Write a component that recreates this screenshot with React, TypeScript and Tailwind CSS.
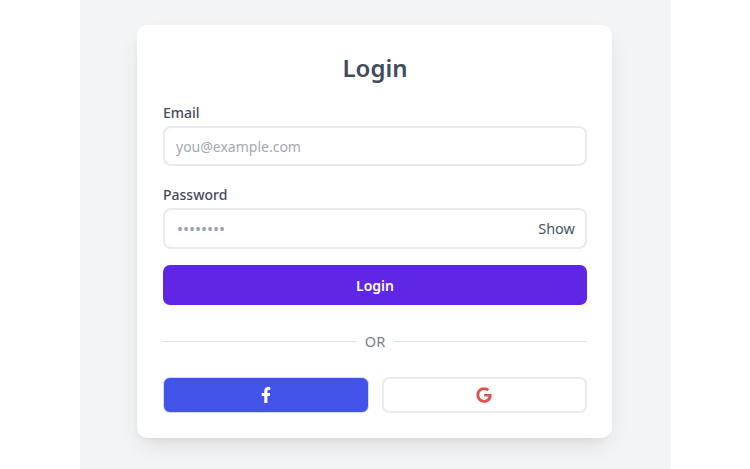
import React from "react";
import { FaFacebookF, FaGoogle } from "react-icons/fa";

const font = "font-['Noto_Sans',sans-serif]";

export default function App() {
  return (
    <div className={`flex h-[469px] w-[750px] justify-center overflow-hidden bg-white ${font}`}>
      <div className="flex h-full w-[591px] justify-center bg-[#f3f4f6] pt-[25px] pr-[1px]">
        <div className="h-[413px] w-[475px] rounded-[10px] bg-white pt-[25px] pr-[25px] pl-[26px] shadow-[0_10px_25px_-5px_rgba(0,0,0,0.1),0_4px_10px_-4px_rgba(0,0,0,0.08)]">
          <h1 className="h-[36px] text-center text-[24px] leading-[36px] font-semibold text-[#414b5a]">Login</h1>

          <form className="mt-[16px]">
            <label className="block h-[21px] text-[14px] leading-[21px] font-medium text-[#454b5a]">Email</label>
            <input
              type="email"
              placeholder="you@example.com"
              className="mt-[3px] block h-[40px] w-full rounded-[8px] border-2 border-[#e9eaee] bg-white px-[11px] text-[14px] text-[#374151] outline-none placeholder:text-[#a3a9b4]"
            />

            <label className="mt-[18px] block h-[21px] text-[14px] leading-[21px] font-medium text-[#454b5a]">Password</label>
            <div className="relative mt-[3px]">
              <input
                type="password"
                defaultValue="password"
                className="block h-[41px] w-full rounded-[8px] border-2 border-[#e9eaee] bg-white px-[12px] text-[16px] text-[#9ca3af] outline-none"
              />
              <button type="button" className="absolute top-0 right-[12px] h-[41px] text-[14.5px] text-[#4b5563]">
                Show
              </button>
            </div>

            <button
              type="button"
              className="mt-[16px] block h-[40px] w-full rounded-[7px] bg-[#5f26e5] pt-[1px] text-[14px] font-semibold text-white"
            >
              Login
            </button>
          </form>

          <div className="mt-[26px] flex h-[20px] items-center gap-[9px]">
            <div className="h-px flex-1 bg-[#dfe1e5]" />
            <span className="pt-[1px] text-[14.5px] text-[#7b818c]">OR</span>
            <div className="h-px flex-1 bg-[#dfe1e5]" />
          </div>

          <div className="mt-[26px] grid grid-cols-2 gap-[13px]">
            <button
              type="button"
              className="flex h-[36px] items-center justify-center rounded-[7px] border border-[#d5dcfb] bg-[#4353e8] text-white"
            >
              <FaFacebookF className="h-[16px] w-[16px]" />
            </button>
            <button
              type="button"
              className="flex h-[36px] items-center justify-center rounded-[7px] border-2 border-[#e9eaee] bg-white text-[#e05252]"
            >
              <FaGoogle className="h-[16px] w-[16px]" />
            </button>
          </div>
        </div>
      </div>
    </div>
  );
}
